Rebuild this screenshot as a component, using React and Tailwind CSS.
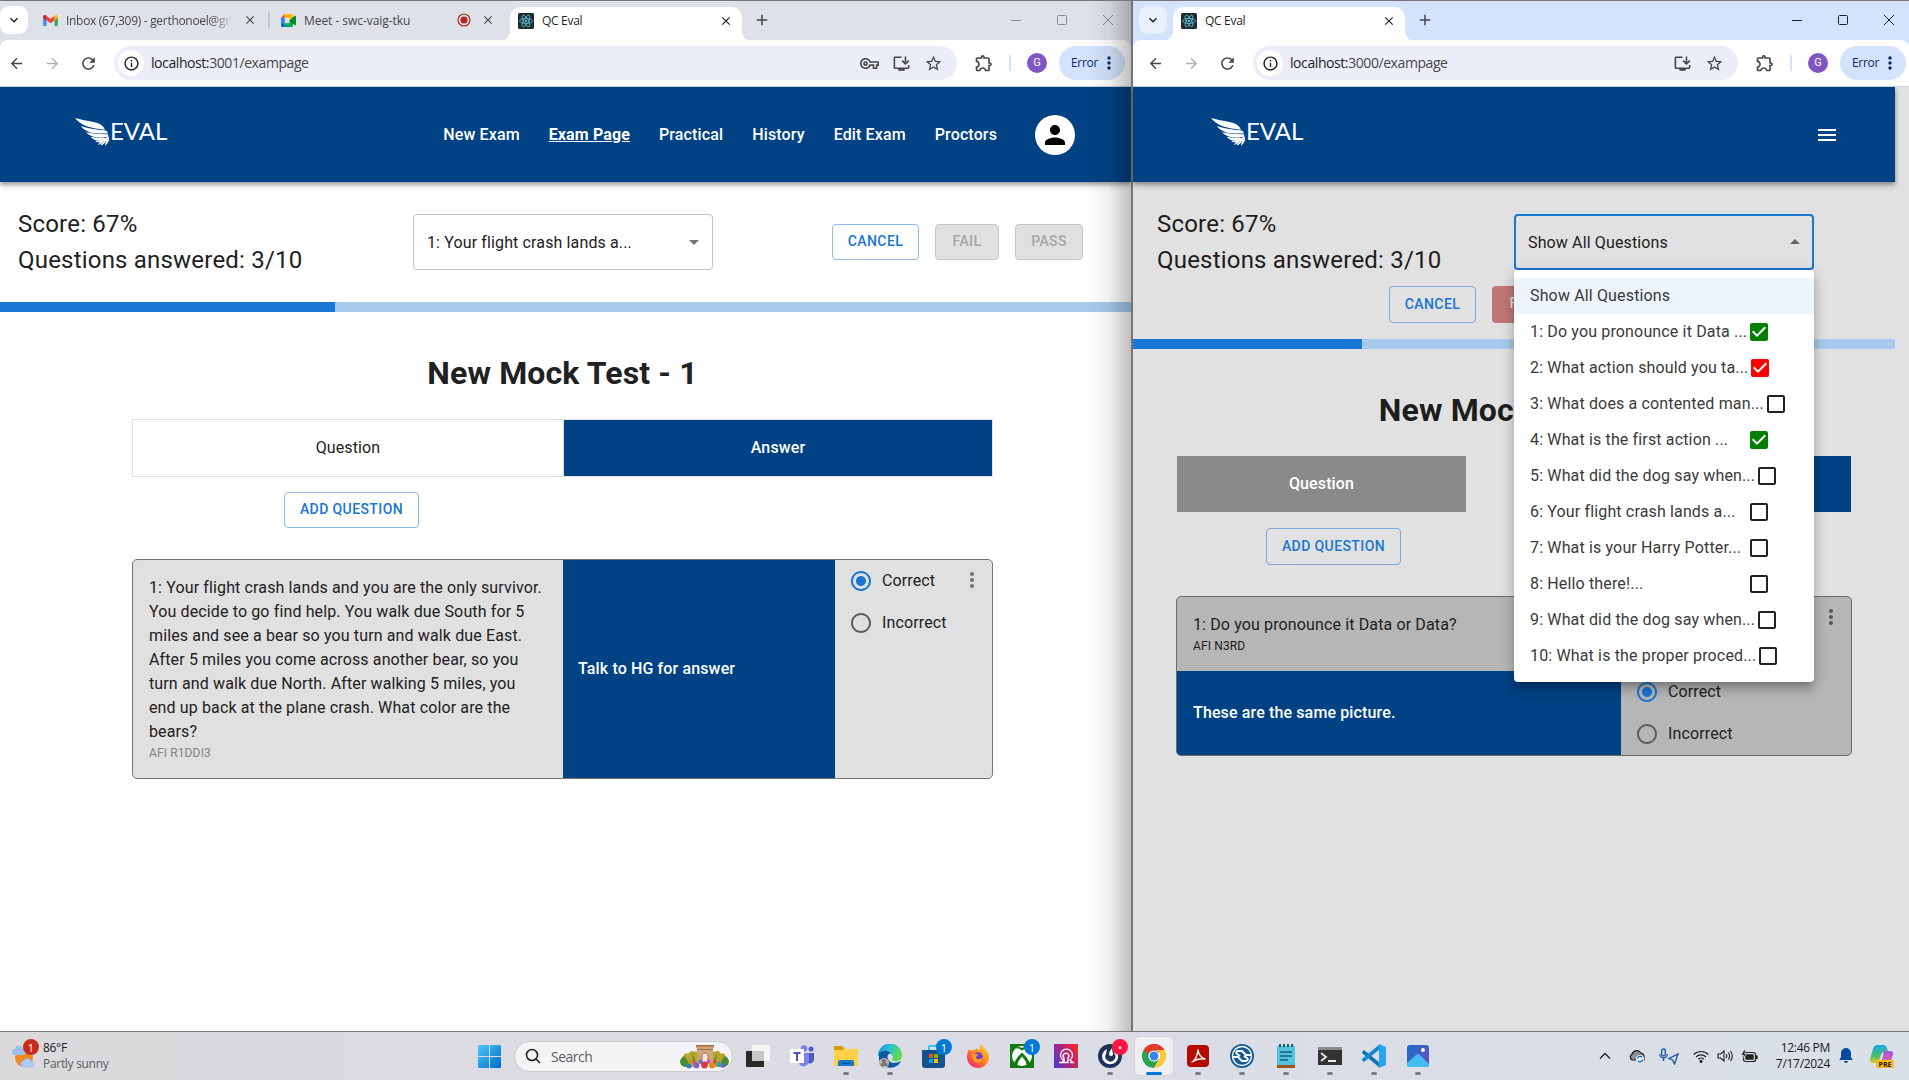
import React from "react";
import {
  MdArrowBack, MdArrowForward, MdRefresh, MdInfoOutline, MdOutlineVpnKey, MdStarBorder,
  MdOutlineExtension, MdMoreVert, MdPerson, MdArrowDropDown, MdArrowDropUp, MdMenu, MdCheckBox,
  MdCheckBoxOutlineBlank, MdRadioButtonChecked, MdRadioButtonUnchecked, MdKeyboardArrowDown,
  MdClose, MdAdd, MdOutlineInstallDesktop,
} from "react-icons/md";

const UI = "font-['Open_Sans','Noto_Sans',sans-serif] tracking-normal";

function ReactFavicon() {
  return (
    <svg viewBox="0 0 16 16" className="h-4 w-4 shrink-0">
      <rect width="16" height="16" rx="1.5" fill="#222a2e" />
      <g fill="none" stroke="#58c4dc" strokeWidth="0.8">
        <ellipse cx="8" cy="8" rx="6.4" ry="2.5" />
        <ellipse cx="8" cy="8" rx="6.4" ry="2.5" transform="rotate(60 8 8)" />
        <ellipse cx="8" cy="8" rx="6.4" ry="2.5" transform="rotate(120 8 8)" />
      </g>
      <circle cx="8" cy="8" r="1.2" fill="#58c4dc" />
    </svg>
  );
}

function GmailIcon() {
  return (
    <svg viewBox="0 0 16 12" className="h-[11px] w-[15px] shrink-0">
      <path d="M0 2v9.200a.8.8 0 0 0 .8.8h2.800V4.700L0 2z" fill="#4285f4" />
      <path d="M16 2v9.200a.8.8 0 0 1-.8.8h-2.800V4.700L16 2z" fill="#34a853" />
      <path d="M12.400 1v4.600L16 3V1.700C16 .2 14.300-.5 13.200.4z" fill="#fbbc04" />
      <path d="M3.600 5.600V1L8 4.200 12.400 1v4.600L8 9z" fill="#ea4335" />
      <path d="M0 1.700V3l3.600 2.600V1L2.800.4C1.700-.5 0 .2 0 1.700z" fill="#c5221f" />
    </svg>
  );
}

function MeetIcon() {
  return (
    <svg viewBox="0 0 16 14" className="h-[13px] w-[15px] shrink-0">
      <path d="M4 0v4H0z" fill="#ea4335" />
      <path d="M0 4h4v6H0z" fill="#2684fc" />
      <path d="M0 10h4v4H1.200A1.200 1.200 0 0 1 0 12.800z" fill="#0066da" />
      <path d="M4 0h7.500c.7 0 1.200.5 1.200 1.200V6L9 8V4H4z" fill="#ffba00" />
      <path d="M4 10h5V7l3.700 2v3.800c0 .7-.5 1.200-1.200 1.200H4z" fill="#00ac47" />
      <path d="M9 7l5.700-5c.5-.4 1.300 0 1.300.6v8.800c0 .6-.8 1-1.300.6z" fill="#00832d" />
    </svg>
  );
}

function RecordIcon() {
  return (
    <svg viewBox="0 0 14 14" className="h-[14px] w-[14px] shrink-0">
      <circle cx="7" cy="7" r="6" fill="none" stroke="#b3261e" strokeWidth="1.2" />
      <circle cx="7" cy="7" r="3.600" fill="#b3261e" />
    </svg>
  );
}

function EvalLogo() {
  return (
    <div className="flex items-start text-white">
      <svg viewBox="0 0 92 81" preserveAspectRatio="none" className="mt-[9px] h-[28px] w-[34px]" fill="#fff">
        <path d="M0 0Q22 6 46 11Q74 14 81 34Q48 30 32 24Q12 16 0 0Z" />
        <path d="M16 23Q40 33 84 36Q88 39 89 45Q56 46 40 41Q24 35 16 23Z" />
        <path d="M29 41Q56 48 89 47L91 54Q64 57 50 54Q38 50 29 41Z" />
        <path d="M42 54Q60 58 79 56Q70 66 58 65Q48 62 42 54Z" />
        <path d="M54 68Q68 65 76 58L83 57Q76 74 61 78Q66 71 68 68Q62 71 54 68Z" />
        <path d="M69 77Q78 69 80 60L85 57L86 61Q82 73 73 79Z" />
        <path d="M81 81Q83 68 85 56L92 55Q95 68 81 81Z" />
      </svg>
      <span className="ml-px mt-[6px] font-['Lato','Open_Sans',sans-serif] text-[24px] leading-[32px] tracking-normal">EVAL</span>
    </div>
  );
}

function ActiveTab() {
  return (
    <div className="relative flex h-[34px] w-[232px] items-center self-end rounded-t-[10px] bg-white pb-[6px] pl-[8px] pr-[9px] text-[#1f1f1f]">
      <span className="absolute -left-[10px] bottom-0 h-[10px] w-[10px] bg-[radial-gradient(circle_at_0_0,transparent_10px,white_10px)]" />
      <span className="absolute -right-[10px] bottom-0 h-[10px] w-[10px] bg-[radial-gradient(circle_at_100%_0,transparent_10px,white_10px)]" />
      <ReactFavicon />
      <span className="ml-2 flex-1 pt-px text-[12px] tracking-[-0.3px]">QC Eval</span>
      <MdClose className="h-[14px] w-[14px] stroke-[#1f1f1f]" />
    </div>
  );
}

function WindowControls({ tone }) {
  return (
    <svg viewBox="0 0 104 12" className={`h-3 w-[104px] ${tone}`} fill="none" stroke="currentColor">
      <path d="M1 6.500h10" />
      <rect x="47.500" y="1.500" width="9" height="9" rx="1" />
      <path d="M93 1l10 10M103 1L93 11" />
    </svg>
  );
}

function Toolbar({ url, withKey, pill, inset }) {
  return (
    <div className={`flex h-[46px] items-center rounded-t-[8px] bg-white text-[#474747] ${inset}`}>
      <MdArrowBack className="h-[17px] w-[17px]" />
      <MdArrowForward className="ml-[19px] h-[17px] w-[17px] text-[#b0b0b0]" />
      <MdRefresh className="ml-[18px] h-[19px] w-[19px]" />
      <div className={`ml-[16px] flex h-[34px] items-center rounded-full bg-[#ebeef8] ${pill}`}>
        <span className="ml-[4px] flex h-[26px] w-[26px] items-center justify-center rounded-full bg-white">
          <MdInfoOutline className="h-[17px] w-[17px] text-[#1f1f1f]" />
        </span>
        <span className="ml-[7px] flex-1 pb-px text-[14px] tracking-[-0.42px] text-[#474747]">
          <span className="text-[#1f1f1f]">localhost:</span>{url}
        </span>
        {withKey && <MdOutlineVpnKey className="mr-[13px] h-[19px] w-[19px]" />}
        <MdOutlineInstallDesktop className="mr-[13px] h-[19px] w-[19px]" />
        <MdStarBorder className="mr-[14px] h-[19px] w-[19px]" />
      </div>
      <MdOutlineExtension className="ml-[17px] h-[20px] w-[20px]" />
      <span className="ml-[15px] h-4 w-[2px] bg-[#d3e3fd]" />
      <span className="ml-[16px] flex h-5 w-5 items-center justify-center rounded-full bg-[#7e57c2] font-['Roboto',sans-serif] text-[11px] text-white">G</span>
      <span className="ml-[12px] flex h-[34px] w-[66px] items-center rounded-full bg-[#d3e3fd] pl-3 text-[12px] tracking-[-0.3px] text-[#0b2a66]">
        Error<MdMoreVert className="ml-auto mr-[6px] h-5 w-5" />
      </span>
    </div>
  );
}

function OutlineButton({ children, className = "" }) {
  return (
    <span className={`flex items-center justify-center rounded border border-[#1976d2]/50 pb-px text-[14px] font-medium tracking-[0.4px] text-[#1976d2] ${className}`}>
      {children}
    </span>
  );
}

function Radios() {
  return (
    <div className="flex flex-col text-[16px] text-[#212121]">
      <div className="flex h-[42px] items-center">
        <MdRadioButtonChecked className="h-6 w-6 text-[#1976d2]" />
        <span className="ml-[9px]">Correct</span>
      </div>
      <div className="flex h-[42px] items-center">
        <MdRadioButtonUnchecked className="h-6 w-6 text-[#5e5e5e]" />
        <span className="ml-[9px]">Incorrect</span>
      </div>
    </div>
  );
}

const NAV = ["New Exam", "Exam Page", "Practical", "History", "Edit Exam", "Proctors"];

function LeftWindow() {
  return (
    <section className="relative flex w-[1131px] shrink-0 flex-col overflow-hidden bg-white">
      <div className={`${UI} flex flex-col bg-[#dee1e8]`}>
        <div className="flex h-[39px] items-center pb-px text-[12px] text-[#474747]">
          <span className="flex h-7 w-7 items-center justify-center rounded-[9px] bg-white text-[#1f1f1f]">
            <MdKeyboardArrowDown className="h-4 w-4 stroke-current" />
          </span>
          <span className="ml-[15px]"><GmailIcon /></span>
          <span className="ml-[8px] w-[168px] overflow-hidden whitespace-nowrap pt-px tracking-[-0.3px] [mask-image:linear-gradient(90deg,#000_145px,transparent_168px)]">
            Inbox (67,309) - gerthonoel@gr
          </span>
          <MdClose className="ml-[9px] h-[14px] w-[14px] stroke-current" />
          <span className="ml-[11px] h-4 w-[2px] bg-[#c2c5cb]" />
          <span className="ml-[11px]"><MeetIcon /></span>
          <span className="ml-[8px] w-[153px] pt-px tracking-[-0.05px]">Meet - swc-vaig-tku</span>
          <RecordIcon />
          <MdClose className="ml-[10px] h-[14px] w-[14px] stroke-current" />
          <span className="ml-[15px] flex h-[39px] translate-y-[1px]"><ActiveTab /></span>
          <MdAdd className="ml-[11px] h-[18px] w-[18px]" />
          <span className="ml-auto mr-[17px]"><WindowControls tone="text-[#8b8d91]" /></span>
        </div>
        <Toolbar url="3001/exampage" withKey pill="w-[843px]" inset="pl-[8px]" />
      </div>
      <div className="h-px shrink-0 bg-[#d5d7da]" />
      <header className="z-10 flex h-[95px] shrink-0 items-center bg-[#004283] pl-[75px] pr-[56px] shadow-[0_2px_4px_rgba(0,0,0,0.3),0_4px_6px_rgba(0,0,0,0.16)]">
        <div className="-mt-[13px]"><EvalLogo /></div>
        <nav className="ml-auto flex items-center gap-[29px] pr-[38px] text-[16px] font-medium text-white">
          {NAV.map((n) => (
            <span key={n} className={n === "Exam Page" ? "font-bold underline" : ""}>{n}</span>
          ))}
        </nav>
        <span className="flex h-10 w-10 items-center justify-center rounded-full bg-white">
          <MdPerson className="h-[30px] w-[30px] text-black" />
        </span>
      </header>
      <main className="flex flex-col text-[#212121]">
        <div className="flex h-[120px] pl-[18px]">
          <div className="w-[395px] pt-[24px] text-[24px] leading-9 tracking-[0.2px]">
            <p>Score: 67%</p>
            <p>Questions answered: 3/10</p>
          </div>
          <div className="mt-8 flex h-14 w-[300px] items-center rounded border border-[#c4c4c4] pl-[13px] pr-[6px]">
            <span className="flex-1 pt-[2px]">1: Your flight crash lands a...</span>
            <MdArrowDropDown className="h-6 w-6 text-[#757575]" />
          </div>
          <div className="ml-[119px] mt-[42px] flex gap-4">
            <OutlineButton className="h-9 w-[87px]">CANCEL</OutlineButton>
            <span className="flex h-9 w-[64px] items-center justify-center rounded border border-[#c6c6c6] bg-[#e0e0e0] pb-px text-[14px] font-medium tracking-[0.4px] text-[#a6a6a6]">FAIL</span>
            <span className="flex h-9 w-[68px] items-center justify-center rounded border border-[#c6c6c6] bg-[#e0e0e0] pb-px text-[14px] font-medium tracking-[0.4px] text-[#a6a6a6]">PASS</span>
          </div>
        </div>
        <div className="h-[10px] bg-[#a7caed]"><div className="h-full w-[335px] bg-[#1976d2]" /></div>
        <div className="ml-[132px] flex w-[861px] flex-col self-start">
          <h1 className="mt-[37px] text-center text-[32px] font-bold leading-[48px]">New Mock Test - 1</h1>
          <div className="mt-[22px] flex h-[58px] border border-[#e0e0e0]">
            <div className="flex w-[431px] items-center justify-center border-r border-[#e0e0e0]">Question</div>
            <div className="flex flex-1 items-center justify-center bg-[#004283] font-medium text-white">Answer</div>
          </div>
          <OutlineButton className="ml-[152px] mt-[15px] h-9 w-[135px]">ADD QUESTION</OutlineButton>
          <article className="mt-[31px] flex h-[220px] overflow-hidden rounded-[5px] border border-[#757575] bg-[#e0e0e0]">
            <div className="w-[430px] pl-4 pt-[16px] leading-6">
              <p className="w-[400px]">
                1: Your flight crash lands and you are the only survivor.<br />You decide to go find help. You walk due South for 5<br />
                miles and see a bear so you turn and walk due East.<br />After 5 miles you come across another bear, so you<br />
                turn and walk due North. After walking 5 miles, you<br />end up back at the plane crash. What color are the<br />bears?
              </p>
              <p className="text-[12px] leading-[18px] text-[#858585]">AFI R1DDI3</p>
            </div>
            <div className="flex w-[272px] items-center bg-[#004283] pl-[15px] font-medium text-white">Talk to HG for answer</div>
            <div className="flex flex-1 pl-[14px]">
              <Radios />
              <MdMoreVert className="ml-auto mr-[8px] mt-[8px] h-6 w-6 text-[#6f6f6f]" />
            </div>
          </article>
        </div>
      </main>
      <div className="absolute inset-y-0 right-0 z-20 w-[44px] bg-gradient-to-l from-black/25 via-black/[0.06] to-transparent" />
    </section>
  );
}

const QUESTIONS = [
  ["1: Do you pronounce it Data ...", "ok"],
  ["2: What action should you ta...", "bad"],
  ["3: What does a contented man...", ""],
  ["4: What is the first action ...", "ok"],
  ["5: What did the dog say when...", ""],
  ["6: Your flight crash lands a...", ""],
  ["7: What is your Harry Potter...", ""],
  ["8: Hello there!...", ""],
  ["9: What did the dog say when...", ""],
  ["10: What is the proper proced...", ""],
];

function QuestionMenu() {
  return (
    <ul className="absolute -left-[2px] top-[54px] z-30 w-[300px] rounded bg-white py-2 text-[16px] tracking-[0.15px] text-[#3a3a3a] shadow-[0_5px_5px_-3px_rgba(0,0,0,0.2),0_8px_10px_1px_rgba(0,0,0,0.14),0_3px_14px_2px_rgba(0,0,0,0.12)]">
      <li className="flex h-9 items-center bg-[#edf4fb] pl-4">Show All Questions</li>
      {QUESTIONS.map(([label, state]) => (
        <li key={label} className="flex h-9 items-center whitespace-nowrap pl-4">
          <span className="min-w-[217px]">{label}</span>
          {state === "ok" && <MdCheckBox className="h-6 w-6 text-[#008000]" />}
          {state === "bad" && <MdCheckBox className="h-6 w-6 text-[#ff0000]" />}
          {state === "" && <MdCheckBoxOutlineBlank className="h-6 w-6 text-[#212121]" />}
        </li>
      ))}
    </ul>
  );
}

function RightWindow() {
  return (
    <section className="flex flex-1 flex-col bg-[#e1e1e1]">
      <div className={`${UI} flex flex-col bg-[#d3e3fd]`}>
        <div className="flex h-[39px] items-center pb-px text-[12px] text-[#474747]">
          <span className="ml-[6px] flex h-7 w-7 items-center justify-center rounded-[9px] bg-[#e9f1fe] text-[#1f1f1f]">
            <MdKeyboardArrowDown className="h-4 w-4 stroke-current" />
          </span>
          <span className="ml-[6px] flex h-[39px] translate-y-[1px]"><ActiveTab /></span>
          <MdAdd className="ml-[11px] h-[18px] w-[18px]" />
          <span className="ml-auto mr-[14px]"><WindowControls tone="text-[#1f1f1f]" /></span>
        </div>
        <Toolbar url="3000/exampage" pill="w-[485px]" inset="pl-[14px]" />
      </div>
      <div className="h-px shrink-0 bg-[#d5d7da]" />
      <div className="flex w-[762px] flex-col">
        <header className="flex h-[95px] items-center justify-between bg-[#004283] pl-[78px] pr-[56px] shadow-[0_2px_4px_rgba(0,0,0,0.3),0_4px_6px_rgba(0,0,0,0.16)]">
          <div className="-mt-[13px]"><EvalLogo /></div>
          <MdMenu className="h-6 w-6 text-white" />
        </header>
        <main className="flex flex-col text-[#1d1d1d]">
          <div className="flex h-[104px] pl-[24px]">
            <div className="w-[357px] pt-[24px] text-[24px] leading-9 tracking-[0.2px]">
              <p>Score: 67%</p>
              <p>Questions answered: 3/10</p>
            </div>
            <div className="relative mt-8 flex h-14 w-[300px] items-center rounded border-2 border-[#1976d2] pl-[12px] pr-[5px]">
              <span className="flex-1 pt-[2px]">Show All Questions</span>
              <MdArrowDropUp className="h-6 w-6 text-[#666]" />
              <QuestionMenu />
            </div>
          </div>
          <div className="flex h-[53px] pl-[256px]">
            <OutlineButton className="h-[37px] w-[87px] pb-[2px]">CANCEL</OutlineButton>
            <span className="ml-4 flex h-[37px] w-[64px] items-center justify-center rounded bg-[#bf7773] pb-[2px] text-[14px] font-medium tracking-[0.4px] text-[#dedede]">FAIL</span>
          </div>
          <div className="h-[10px] bg-[#a7caed]"><div className="h-full w-[229px] bg-[#1976d2]" /></div>
          <div className="ml-[43px] flex w-[676px] flex-col">
            <h1 className="mt-[37px] text-center text-[32px] font-bold leading-[48px]">New Mock Test - 1</h1>
            <div className="mx-px mt-[22px] flex h-[56px] justify-between text-white">
              <div className="flex w-[289px] items-center justify-center bg-[#8a8a8a] pb-px font-medium">Question</div>
              <div className="flex w-[289px] items-center justify-center bg-[#004283] pb-px font-medium">Answer</div>
            </div>
            <OutlineButton className="ml-[90px] mt-[16px] h-[37px] w-[135px]">ADD QUESTION</OutlineButton>
            <article className="mt-[31px] flex h-[160px] flex-col overflow-hidden rounded-[5px] border border-[#6b6b6b] bg-[#b6b6b6]">
              <div className="flex h-[74px] pl-4">
                <div className="flex-1 pt-[16px]">
                  <p className="leading-6">1: Do you pronounce it Data or Data?</p>
                  <p className="text-[12px] leading-[18px]">AFI N3RD</p>
                </div>
                <MdMoreVert className="mr-[8px] mt-[8px] h-6 w-6 text-[#555]" />
              </div>
              <div className="flex h-[84px]">
                <div className="flex w-[444px] items-center bg-[#004283] pl-4 font-medium text-white">These are the same picture.</div>
                <div className="pl-[14px]"><Radios /></div>
              </div>
            </article>
          </div>
        </main>
      </div>
    </section>
  );
}

function Badge({ children, className = "bg-[#0078d4]" }) {
  return (
    <span className={`absolute -right-[6px] -top-[5px] flex h-4 w-4 items-center justify-center rounded-full text-[11px] leading-none text-white ${className}`}>{children}</span>
  );
}

function TaskIcon({ children, running, badge }) {
  return (
    <span className="relative flex h-6 w-6 shrink-0 items-center justify-center">
      {children}
      {badge}
      {running && <span className="absolute -bottom-[7px] left-[9px] h-[3px] w-[6px] rounded-full bg-[#7c7c80]" />}
    </span>
  );
}

function Taskbar() {
  return (
    <footer className={`${UI} flex h-[48px] shrink-0 items-center bg-gradient-to-r from-[#dadadc] via-[#dcdce6] to-[#d9e0e6] text-[#1b1b1b]`}>
      <div className="flex w-[478px] items-center pl-3">
        <span className="relative h-7 w-[28px]">
          <svg viewBox="0 0 28 28" className="h-7 w-7">
            <circle cx="12" cy="16" r="9" fill="#f08a1c" />
            <path d="M3 13a3 3 0 0 1 0-6 4 4 0 0 1 8 1 2.500 2.500 0 0 1 0 5z" fill="#9cc0f0" />
            <path d="M12 25a3.200 3.200 0 0 1 0-6.400 4 4 0 0 1 7.500 1 2.700 2.700 0 0 1-.5 5.400z" fill="#a9ccf7" stroke="#86aee0" strokeWidth=".5" />
          </svg>
          <span className="absolute -top-[3px] left-[11px] flex h-4 w-4 items-center justify-center rounded-full bg-[#c42b1c] text-[11px] leading-none text-white">1</span>
        </span>
        <span className="ml-[3px] flex flex-col text-[12px] leading-4 tracking-[-0.3px]">
          <span>86°F</span><span className="text-[#5c5c5e]">Partly sunny</span>
        </span>
      </div>
      <svg viewBox="0 0 23 23" className="h-[23px] w-[23px] shrink-0">
        <defs><linearGradient id="win" x1="0" y1="0" x2="1" y2="1"><stop stopColor="#4cc9fb" /><stop offset="1" stopColor="#0069c8" /></linearGradient></defs>
        <path d="M1 0h10v11H0V1zM12 0h10l1 1v10H12zM0 12h11v11H1l-1-1zM12 12h11v10l-1 1H12z" fill="url(#win)" />
      </svg>
      <div className="ml-[13px] mr-px flex h-[31px] w-[219px] shrink-0 items-center rounded-full border border-[#c9c9cf] bg-[#f4f4f7] pl-[10px] pr-[3px]">
        <svg viewBox="0 0 16 16" className="h-4 w-4" fill="none" stroke="#222" strokeWidth="1.600"><circle cx="7" cy="7" r="5.500" /><path d="M11 11l4 4" /></svg>
        <span className="ml-[10px] flex-1 text-[14px] tracking-[-0.5px] text-[#5f5f5f]">Search</span>
        <svg viewBox="0 0 49 25" className="h-[25px] w-[49px]">
          <path d="M1 18Q4 7 8 10Q11 5 14 8Q16 6 18 9V23H5zM48 18Q45 7 41 10Q38 4 35 8Q33 6 31 9V23H44z" fill="#b5a52b" />
          <path d="M0 17Q3 10 6 14L10 23H5Q0 22 0 17zM49 17Q46 10 43 14L39 23H44Q49 22 49 17zM12 9l2 12h3zM37 9l-2 12h-3z" fill="#4a8c35" />
          <path d="M16 1h18v3h-1v16H17V4h-1z" fill="#d0a57c" />
          <path d="M16 1h18v1.500H16zM17 5h16v1H17z" fill="#a06f4c" />
          <path d="M22 20v-9q3-4 6 0v9z" fill="#f3e7dc" stroke="#9a6b4a" strokeWidth=".8" />
          <g><circle cx="9" cy="22" r="2.500" fill="#2c7fd0" /><circle cx="16.500" cy="21.500" r="2.900" fill="#8b5cd6" /><circle cx="24.500" cy="21" r="3.400" fill="#d93a3a" /><circle cx="32" cy="21.500" r="3" fill="#f58220" /><circle cx="39" cy="20.500" r="2.500" fill="#2aa5b5" /><circle cx="13.500" cy="18" r="1.700" fill="#e0526a" /><circle cx="20.500" cy="17.500" r="1.900" fill="#4b74d8" /><circle cx="28.500" cy="17.500" r="1.900" fill="#b35ad0" /><circle cx="35" cy="17.500" r="1.800" fill="#e04848" /><circle cx="43" cy="22" r="2" fill="#8b5cd6" /></g>
        </svg>
      </div>
      <div className="ml-[12px] flex shrink-0 items-center gap-[20px]">
        <TaskIcon><svg viewBox="0 0 24 24" className="h-6 w-6"><path d="M0 7h18v16H0z" fill="#292929" /><path d="M6 1h18v16H6z" fill="#f5f5f5" fillOpacity=".93" /><path d="M6 7h12v10H6z" fill="#c6c6c8" /></svg></TaskIcon>
        <TaskIcon><svg viewBox="0 0 24 24" className="h-6 w-6"><circle cx="21" cy="5" r="2.500" fill="#5059c9" /><path d="M17 9h7v7a4 4 0 0 1-7 2z" fill="#5059c9" /><circle cx="14" cy="4.500" r="3.300" fill="#7b83eb" /><path d="M9 9h10v8a5.500 5.500 0 0 1-10 3z" fill="#7b83eb" /><path d="M0 5h14v14H0z" fill="#fff" /><path d="M3.500 8h7v2H8v7H6v-7H3.500z" fill="#4b53bc" /></svg></TaskIcon>
        <TaskIcon running><svg viewBox="0 0 24 24" className="h-6 w-6"><path d="M0 3q0-1 1-1h7l3 3v4H0z" fill="#dc9a00" /><path d="M0 6h8l2-1h13q1 0 1 1v16H0z" fill="#ffcf48" /><path d="M4 22v-4q0-2 2-2h12q2 0 2 2v4z" fill="#1779c9" /><path d="M8 19h8v1H8z" fill="#0c4f94" /></svg></TaskIcon>
        <TaskIcon running>
          <svg viewBox="0 0 24 24" className="h-6 w-6"><defs><linearGradient id="edge" x1="0" y1="0" x2="1" y2="0.400"><stop stopColor="#1689d8" /><stop offset=".5" stopColor="#2bc2d4" /><stop offset="1" stopColor="#62d94f" /></linearGradient></defs><path d="M0 12a12 12 0 0 1 24-1c0 5-4 7-8 6-3-1-1-2-1-4-1-4-7-5-11-1z" fill="url(#edge)" /><path d="M1 9q7-5 12 0c-6 1-4 10 3 10q3 0 7-2a12 12 0 0 1-22-1z" fill="#0c59a4" /><circle cx="6" cy="19" r="5" fill="#b8b4b0" /><circle cx="6" cy="17" r="2" fill="#77726d" /><path d="M2.500 22a3.500 3.500 0 0 1 7 0z" fill="#77726d" /></svg>
        </TaskIcon>
        <TaskIcon badge={<Badge>1</Badge>}><svg viewBox="0 0 24 24" className="h-6 w-6"><path d="M6 6V3q0-2 2-2h8q2 0 2 2v3h-2V3H8v3z" fill="#35c0f0" /><path d="M0 6h23v15q0 3-3 3H3q-3 0-3-3z" fill="#14528c" /><path d="M7 10h4v4H7z" fill="#f25022" /><path d="M12 10h4v4h-4z" fill="#7fba00" /><path d="M7 15h4v4H7z" fill="#00a4ef" /><path d="M12 15h4v4h-4z" fill="#ffb900" /></svg></TaskIcon>
        <TaskIcon><svg viewBox="0 0 24 24" className="h-6 w-6"><defs><linearGradient id="ff" x1="1" y1="0" x2=".2" y2="1"><stop stopColor="#ffe53b" /><stop offset=".5" stopColor="#ff8a1c" /><stop offset="1" stopColor="#f0296a" /></linearGradient></defs><path d="M3 5l2 2q2-2 4-1l2-2q1 2 3 2-1-3 1-6 2 3 4 5 4 3 4 8a11 11 0 0 1-22 0q0-5 2-8z" fill="url(#ff)" /><circle cx="12" cy="13" r="4.800" fill="#7a3ad0" /><path d="M6 10q4-1 7 1-3 0-3 3 3 3 7-1-1 5-5 6-6 0-6-9z" fill="#ff9a20" /></svg></TaskIcon>
        <TaskIcon badge={<Badge>1</Badge>}><svg viewBox="0 0 24 24" className="h-6 w-6"><path d="M0 0h24v24H0z" fill="#107c10" /><circle cx="12" cy="12" r="10" fill="#fff" /><path d="M12 8.500Q6 14 4.200 19Q6 21 7 21.500Q8.500 16 12 12.500Q15.500 16 17 21.500Q18 21 19.800 19Q18 14 12 8.500z" fill="#107c10" /><path d="M5 4Q9 2 12 4Q15 2 19 4Q15 4 12 6.500Q9 4 5 4z" fill="#107c10" /></svg></TaskIcon>
        <TaskIcon><svg viewBox="0 0 24 24" className="h-6 w-6"><defs><linearGradient id="pw" x1="0" y1=".7" x2="1" y2=".2"><stop stopColor="#5a35c8" /><stop offset=".5" stopColor="#b32579" /><stop offset="1" stopColor="#f4262c" /></linearGradient></defs><path d="M0 0h24v24H0z" fill="url(#pw)" /><g fill="none" stroke="#fff" strokeWidth="1.300"><path d="M5 18.500h4v-2.500a6 6 0 1 1 7 0l3 2.500h-3" /><path d="M10 18v-4a2.800 2.800 0 1 1 4 0v4.500h-4z" /></g></svg></TaskIcon>
        <TaskIcon running badge={<Badge className="bg-[#ff1744]">•</Badge>}><svg viewBox="0 0 24 24" className="h-6 w-6"><circle cx="12" cy="12" r="12" fill="#1e325c" /><path d="M9 5a8 8 0 1 0 8 1l-1 3a5 5 0 1 1-8 1z" fill="#fff" /><path d="M14 4q-3 4-3 6 0 2 2 2t2-2z" fill="#fff" /></svg></TaskIcon>
        <span className="relative -mx-[7px] flex h-[38px] w-[38px] items-center rounded bg-[#eeeef3] pl-[7px] shadow-[0_0_1px_#999]">
          <svg viewBox="0 0 24 24" className="h-6 w-6"><circle cx="12" cy="12" r="12" fill="#fff" /><path d="M12 12L1.600 6A12 12 0 0 1 22.400 6z" fill="#e33b2e" /><path d="M1.600 6A12 12 0 0 0 12 24l5.200-9H12z" fill="#2ba24c" /><path d="M1.600 6l5.200 9L12 12z" fill="#2ba24c" /><path d="M22.400 6A12 12 0 0 1 12 24l5.200-9a6 6 0 0 0-5.200-9z" fill="#fcc934" /><path d="M1.600 6A12 12 0 0 1 22.400 6H12a6 6 0 0 0-5.500 4z" fill="#e33b2e" /><circle cx="12" cy="12" r="5.600" fill="#fff" /><circle cx="12" cy="12" r="4.500" fill="#3b82f0" /></svg>
          <span className="absolute bottom-0 left-[11px] h-[3px] w-4 rounded-full bg-[#0078d4]" />
        </span>
        <TaskIcon running><svg viewBox="0 0 24 24" className="h-6 w-6"><rect x="1" y="1" width="22" height="22" rx="4" fill="#b30b00" /><path d="M6 18q5-3 6-12 1 7 7 9-7-1-13 3z" fill="none" stroke="#fff" strokeWidth="1.400" strokeLinejoin="round" /></svg></TaskIcon>
        <TaskIcon running><svg viewBox="0 0 24 24" className="h-6 w-6" fill="none"><circle cx="12" cy="12" r="12" fill="#135a96" /><circle cx="12" cy="12" r="9.500" stroke="#fff" strokeWidth="1.400" /><path d="M3 13h5l4 4h4q3-1 1-3l-3-2M21 11h-5l-4-4H8q-3 1-1 3l3 2" stroke="#fff" strokeWidth="2" /></svg></TaskIcon>
        <TaskIcon running><svg viewBox="0 0 24 24" className="h-6 w-6"><path d="M3 2h18v20H3z" fill="#52c3dc" /><path d="M3 21h18v3H3z" fill="#a3541a" /><path d="M6 0v3M10 0v3M14 0v3M18 0v3" stroke="#14607a" strokeWidth="2" /><path d="M6 8h12M6 12h12M6 16h8" stroke="#14607a" strokeWidth="1.600" /></svg></TaskIcon>
        <TaskIcon running><svg viewBox="0 0 24 24" className="h-6 w-6"><path d="M0 3h24v18H0z" fill="#333" /><path d="M0 3h24v3H0z" fill="#8a8a8a" /><path d="M3 9l5 4-5 4" stroke="#ddd" strokeWidth="2" fill="none" /><path d="M10 17h8" stroke="#fff" strokeWidth="1.800" /></svg></TaskIcon>
        <TaskIcon running><svg viewBox="0 0 24 24" className="h-6 w-6"><path d="M0 8l2-2 16 13v5L0 9z" fill="#0a72b8" /><path d="M0 16l2 2L18 5V0L0 15z" fill="#1288d6" /><path d="M17 0l7 3v18l-7 3z" fill="#27a5ef" /></svg></TaskIcon>
        <TaskIcon running><svg viewBox="0 0 24 24" className="h-6 w-6"><defs><linearGradient id="ph" x1="0" y1="0" x2="1" y2=".8"><stop stopColor="#1471c8" /><stop offset="1" stopColor="#6a4fc4" /></linearGradient></defs><rect x="1" y="1" width="22" height="22" rx="3" fill="url(#ph)" /><path d="M1 19l9-8q2-2 4 0l9 9q0 3-3 3H4q-3 0-3-3z" fill="#43bdf0" /><circle cx="17" cy="6" r="2" fill="#fff" /></svg></TaskIcon>
      </div>
      <div className="ml-auto flex shrink-0 items-center pr-[15px]">
        <svg viewBox="0 0 12 12" className="h-3 w-3" fill="none" stroke="#222" strokeWidth="1.300"><path d="M1 8.500l5-5 5 5" /></svg>
        <svg viewBox="0 0 17 14" className="ml-[17px] h-[14px] w-[17px]"><path d="M4 11a3.500 3.500 0 0 1 0-6 5 5 0 0 1 9-1 3.500 3.500 0 0 1 3 3v4z" fill="#8d8d8d" stroke="#1f1f1f" strokeWidth="1.200" /><circle cx="12" cy="10" r="4" fill="#e6f1fb" /><path d="M9.500 9.500a2.600 2.600 0 0 1 4.600-1.200M14.600 10.500a2.600 2.600 0 0 1-4.600 1.400" stroke="#0b62c4" strokeWidth="1.300" fill="none" /></svg>
        <svg viewBox="0 0 20 17" className="ml-[14px] h-[17px] w-[20px]" fill="none" stroke="#1a55a8" strokeWidth="1.300"><rect x="2.700" y="1" width="3.600" height="7" rx="1.800" /><path d="M.7 6a3.800 3.800 0 0 0 7.600 0M4.500 10v3M19 6l-3.500 10-2-4-3.500-1.500z" /></svg>
        <svg viewBox="0 0 16 13" className="ml-[14px] h-[13px] w-4" fill="none" stroke="#222" strokeWidth="1.200"><path d="M.7 4.500a10.400 10.400 0 0 1 14.600 0M3 7a7 7 0 0 1 10 0M5.200 9.300a4 4 0 0 1 5.600 0" /><circle cx="8" cy="11.300" r="1" fill="#222" /></svg>
        <svg viewBox="0 0 17 14" className="ml-[8px] h-[14px] w-[17px]" fill="none" stroke="#222" strokeWidth="1.100"><path d="M1 5v4h2.500L7 12V2L3.500 5zM9 5q1.500 2 0 4M11.300 3.500q2.500 3.500 0 7M13.500 2q3.500 5 0 10" /></svg>
        <svg viewBox="0 0 17 13" className="ml-[7px] h-[13px] w-[17px]"><rect x="2.500" y="2.500" width="12" height="9" rx="2" fill="none" stroke="#222" strokeWidth="1.200" /><rect x="4.300" y="4.300" width="8.400" height="5.400" rx=".8" fill="#222" /><path d="M15 5.500h1.700v3.500H15z" fill="#222" /><path d="M3 0L0 5h2.500L1 9l5-5.500H3.500L5 0z" fill="#222" stroke="#dcdfe6" strokeWidth=".7" /></svg>
        <span className="ml-[16px] flex w-[56px] flex-col items-end whitespace-nowrap text-[12px] leading-4 tracking-[-0.3px]">
          <span>12:46 PM</span><span>7/17/2024</span>
        </span>
        <svg viewBox="0 0 14 16" className="ml-[9px] h-[16px] w-[14px]" fill="#0a4a9e"><path d="M7 0a5 5 0 0 1 5 5v4l1.700 3H.3L2 9V5a5 5 0 0 1 5-5zM5 13h4q0 2-2 2t-2-2z" /></svg>
        <span className="relative ml-[17px] h-6 w-[24px]">
          <svg viewBox="0 0 24 24" className="h-6 w-6"><defs><linearGradient id="cp" x1="0" y1="0" x2="0" y2="1"><stop stopColor="#1fa6ee" /><stop offset=".6" stopColor="#45c06a" /><stop offset="1" stopColor="#f0c52c" /></linearGradient><linearGradient id="cq" x1="0" y1="0" x2="0" y2="1"><stop stopColor="#a252e0" /><stop offset="1" stopColor="#f56a8a" /></linearGradient></defs><path d="M7 1h7q2 0 3 3l1 4h-4q-2 0-3 3l-2 6q-1 2-3 2H3q-4 0-3-4l3-10q1-4 4-4z" fill="url(#cp)" /><path d="M14 7h6q4 0 3 4l-3 8q-1 3-4 3H9l2-3 2-7q.5-3 1-5z" fill="url(#cq)" /></svg>
          <span className="absolute left-[6px] top-[16px] flex h-[8px] w-[18px] items-center justify-center rounded-[2px] bg-[#fcb827] text-[7px] font-bold leading-none text-[#2d2100]">PRE</span>
        </span>
      </div>
    </footer>
  );
}

export default function App() {
  return (
    <div className="flex h-[1080px] w-[1909px] flex-col overflow-hidden bg-white font-['Roboto',sans-serif] text-[16px] tracking-[0.13px]">
      <div className="h-px shrink-0 bg-[#777]" />
      <div className="flex h-[1030px] shrink-0">
        <LeftWindow />
        <div className="w-[2px] shrink-0 bg-[#757575]" />
        <RightWindow />
      </div>
      <div className="h-px shrink-0 bg-[#777]" />
      <Taskbar />
    </div>
  );
}
